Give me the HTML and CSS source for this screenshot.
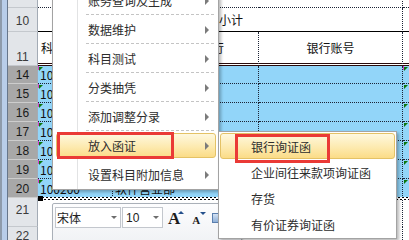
FILE: index.html
```html
<!DOCTYPE html>
<html lang="zh-CN">
<head>
    <title>函证 - 工作底稿</title>
    <meta charset="utf-8"/>
    <link rel="stylesheet" href="styles.css">
</head>
<body>
<div class="window">
    <div class="edge"></div>
    <div class="sheet">
        <div class="row r9">
            <div class="rh">9</div>
            <div class="c a"></div><div class="c b"></div><div class="c k"></div><div class="c e"></div>
        </div>
        <div class="row r10">
            <div class="rh">10</div>
            <div class="c a"></div><div class="c b total">小计</div><div class="c k"></div><div class="c e"></div>
        </div>
        <div class="row r11">
            <div class="rh">11</div>
            <div class="c a">科目编码</div><div class="c b bank">开户银行</div><div class="c k mid">银行账号</div><div class="c e"></div>
        </div>
        <div class="row d first">
            <div class="rh">14</div>
            <div class="c a">100201</div><div class="c b">工行营业部</div><div class="c k"></div><div class="c e"></div>
        </div>
        <div class="row d">
            <div class="rh">15</div>
            <div class="c a">100202</div><div class="c b">建行城东支行</div><div class="c k"></div><div class="c e"></div>
        </div>
        <div class="row d">
            <div class="rh">16</div>
            <div class="c a">100203</div><div class="c b">农行开发区支行</div><div class="c k"></div><div class="c e"></div>
        </div>
        <div class="row d">
            <div class="rh">17</div>
            <div class="c a">100204</div><div class="c b">中行高新支行</div><div class="c k"></div><div class="c e"></div>
        </div>
        <div class="row d">
            <div class="rh">18</div>
            <div class="c a">100205</div><div class="c b">招行科技园支行</div><div class="c k"></div><div class="c e"></div>
        </div>
        <div class="row d">
            <div class="rh">19</div>
            <div class="c a">100206</div><div class="c b">交行营业部</div><div class="c k"></div><div class="c e"></div>
        </div>
        <div class="row d">
            <div class="rh">20</div>
            <div class="c a">100200</div><div class="c b">软件营业部</div><div class="c k"></div><div class="c e"></div>
        </div>
        <div class="row r21">
            <div class="rh">21</div>
            <div class="c a"></div><div class="c b"></div><div class="c k"></div><div class="c e"></div>
        </div>
        <div class="row r22">
            <div class="rh">22</div>
            <div class="c a"></div><div class="c b"></div><div class="c k"></div><div class="c e"></div>
        </div>
    </div>
</div>

<!-- copy marquee round rows 14-20 -->
<div class="ants"></div>
<div class="handle"></div>

<!-- floating format bar -->
<div class="mini">
    <div class="combo font">宋体<i class="dd"></i></div>
    <div class="combo size">10<i class="dd"></i></div>
    <span class="fa big">A<i class="tri up"></i></span>
    <span class="fa small">A<i class="tri down"></i></span>
    <span class="ico"></span>
</div>

<!-- context menu -->
<div class="menu">
    <div class="mi">账务查询及生成<i class="arr"></i></div>
    <div class="mi">数据维护<i class="arr"></i></div>
    <div class="mi">科目测试<i class="arr"></i></div>
    <div class="mi">分类抽凭<i class="arr"></i></div>
    <div class="mi">添加调整分录<i class="arr"></i></div>
    <div class="mi hot">放入函证<i class="arr"></i></div>
    <div class="mi last">设置科目附加信息<i class="arr"></i></div>
</div>

<div class="sub">
    <div class="si hot">银行询证函</div>
    <div class="si">企业间往来款项询证函</div>
    <div class="si">存货</div>
    <div class="si">有价证券询证函</div>
</div>

<div class="redbox rb1"></div>
<div class="redbox rb2"></div>
</body>
</html>
```

FILE: styles.css
```css
* {
    box-sizing: border-box;
}

body {
    margin: 0;
    width: 409px;
    height: 240px;
    overflow: hidden;
    background: #fff;
    font-family: "Noto Sans CJK SC", sans-serif;
    font-size: 12px;
    color: #111;
}

.window {
    display: flex;
    height: 240px;
    overflow: hidden;
}

.edge {
    flex: none;
    width: 8px;
    background: linear-gradient(to right, #8e9bab 0, #8e9bab 2px, #b8cde9 2px, #b8cde9 7px, #66768b 7px);
}

.sheet {
    flex: 1;
    margin-top: -12px;
}

/* rows */
.row {
    display: flex;
    height: 19px;
}
.r9 { height: 20px; }
.r10 { height: 24px; }
.r11 { height: 34px; }
.d.first { height: 18px; }
.r21 { height: 29px; }
.r22 { height: 17px; }

.rh {
    flex: none;
    width: 30px;
    display: flex;
    align-items: flex-end;
    justify-content: center;
    padding-bottom: 1px;
    background: #e2e5e9;
    border-right: 1px solid #a3abb5;
    border-bottom: 1px solid #c4c8cd;
    font-family: "Liberation Sans", sans-serif;
    font-size: 12px;
    color: #3a3a3a;
}
.r9 .rh { padding-bottom: 4px; }
.r10 .rh { padding-bottom: 3px; }
.r21 .rh { padding-bottom: 9px; }
.r22 .rh { padding-bottom: 0; }
.d .rh {
    background: #a8a8a8;
    border-bottom-color: #cdcdcd;
    color: #1a1a1a;
}

.c {
    position: relative;
    display: flex;
    align-items: center;
    padding: 0 2px;
    white-space: nowrap;
    overflow: hidden;
}
.a { width: 75px; flex: none; }
.b { width: 146px; flex: none; }
.k { width: 144px; flex: none; }
.e { flex: 1; }

.r9 .c { border-bottom: 1px dotted #1c2436; }
.r9 .k, .r10 .k { border-right: 1px dotted #1c2436; }
.r10 .c { border-bottom: 1px solid #000; }
.r11 .c { border-bottom: 3px double #2a0c0c; }
.r11 .b, .r11 .k { border-right: 1px dotted #1c2436; }
.r21 .k, .r22 .k { border-right: 1px dotted #1c2436; }

.total { padding-left: 106px; }
.r11 .a { padding-left: 3px; }
.bank { justify-content: flex-end; padding-right: 34px; }
.mid { justify-content: center; }

.d .c {
    background: #92d5f9;
    border-bottom: 1px dotted #1c2436;
}
.d .a, .d .b, .d .k { border-right: 1px dotted #1c2436; }
.d .a::before, .d .e::before {
    content: "";
    position: absolute;
    left: 1px;
    top: 1px;
    border-top: 4px solid #0b760b;
    border-right: 4px solid transparent;
}
.d .a::after, .d.first .e::after {
    content: "";
    position: absolute;
    left: 0;
    top: 0;
    width: 1px;
    height: 4px;
    background: #d63ccc;
}

/* copy marquee */
.ants {
    position: absolute;
    left: 38px;
    right: 0;
    top: 197px;
    height: 3px;
    background:
        repeating-linear-gradient(90deg, #000 0, #000 2px, #fff 2px, #fff 4px) 0 0 / 100% 1px no-repeat,
        repeating-linear-gradient(90deg, #fff 0, #fff 2px, #000 2px, #000 4px) 0 2px / 100% 1px no-repeat,
        #fff;
}
.handle {
    position: absolute;
    left: 38px;
    top: 196px;
    width: 5px;
    height: 5px;
    background: #000;
}

/* floating format bar */
.mini {
    position: absolute;
    left: 52px;
    top: 203px;
    width: 190px;
    height: 44px;
    padding: 3px 2px;
    display: flex;
    align-items: flex-start;
    border: 1px solid #aab0b8;
    border-radius: 2px;
    background: linear-gradient(#fdfdfe, #eff1f4);
    box-shadow: 1px 1px 2px rgba(0, 0, 0, .2);
    z-index: 5;
}
.combo {
    height: 21px;
    display: flex;
    align-items: center;
    padding-left: 1px;
    border: 1px solid #c3c7cd;
    background: #fff;
    color: #222;
}
.combo.font { width: 66px; }
.combo.size {
    width: 41px;
    margin-left: 1px;
    padding-left: 3px;
    font-family: "Liberation Sans", sans-serif;
}
.dd {
    margin-left: auto;
    margin-right: 3px;
    border-top: 3px solid #6d6d6d;
    border-left: 3px solid transparent;
    border-right: 3px solid transparent;
}
.fa {
    position: relative;
    height: 21px;
    display: flex;
    align-items: center;
    font-family: "Liberation Serif", serif;
    font-weight: bold;
    color: #1d1d1d;
}
.fa.big { font-size: 17px; margin-left: 5px; padding-top: 3px; }
.fa.small { font-size: 11px; margin-left: 12px; padding-top: 5px; }
.tri {
    position: absolute;
    border-left: 3px solid transparent;
    border-right: 3px solid transparent;
}
.tri.up { right: -4px; top: 4px; border-bottom: 3px solid #24508c; }
.tri.down { right: -6px; top: 5px; border-top: 3px solid #24508c; }
.ico {
    width: 8px;
    height: 10px;
    margin: 6px 0 0 12px;
    border: 1px solid #5b7fae;
    background: linear-gradient(#d4e2f3, #8fb0d8);
}

/* context menu */
.menu {
    position: absolute;
    left: 52px;
    top: -15px;
    width: 167px;
    border: 1px solid #a3a3a3;
    background: linear-gradient(to right, #fff 0, #fff 24px, #e2e3e4 24px, #e2e3e4 25px, #fff 25px);
    box-shadow: 2px 2px 3px rgba(0, 0, 0, .28);
    color: #2c2c2c;
    z-index: 10;
}
.mi {
    height: 29px;
    display: flex;
    align-items: center;
    padding-left: 35px;
    background: repeating-linear-gradient(to right, #c4c4c4 0, #c4c4c4 3px, transparent 3px, transparent 5px) 33px 100% / 129px 1px no-repeat;
}
.mi.last { background: none; }
.mi.hot {
    height: 25px;
    margin: 2px 2px 2px 3px;
    padding-left: 31px;
    border: 1px solid #e4c266;
    border-radius: 3px;
    background: linear-gradient(#fef8df, #fdeab0 55%, #fbdc87);
}
.arr {
    margin-left: auto;
    margin-right: 9px;
    border-left: 4px solid #7b7b7b;
    border-top: 4px solid transparent;
    border-bottom: 4px solid transparent;
}
.mi.hot .arr { margin-right: 6px; }

.sub {
    position: absolute;
    left: 218px;
    top: 131px;
    width: 179px;
    padding: 1px 0;
    border: 1px solid #a3a3a3;
    background: #fff;
    box-shadow: 2px 2px 3px rgba(0, 0, 0, .28);
    color: #2c2c2c;
    z-index: 11;
}
.si {
    height: 26px;
    display: flex;
    align-items: center;
    padding-left: 32px;
}
.si.hot {
    margin: 0 1px;
    padding-left: 30px;
    border: 1px solid #e4c266;
    border-radius: 3px;
    background: linear-gradient(#fef8df, #fdeab0 55%, #fbdc87);
}

/* red marks */
.redbox {
    position: absolute;
    border: 3px solid #ea3a36;
    z-index: 12;
}
.rb1 { left: 57px; top: 132px; width: 117px; height: 27px; }
.rb2 { left: 235px; top: 134px; width: 95px; height: 29px; }
```
